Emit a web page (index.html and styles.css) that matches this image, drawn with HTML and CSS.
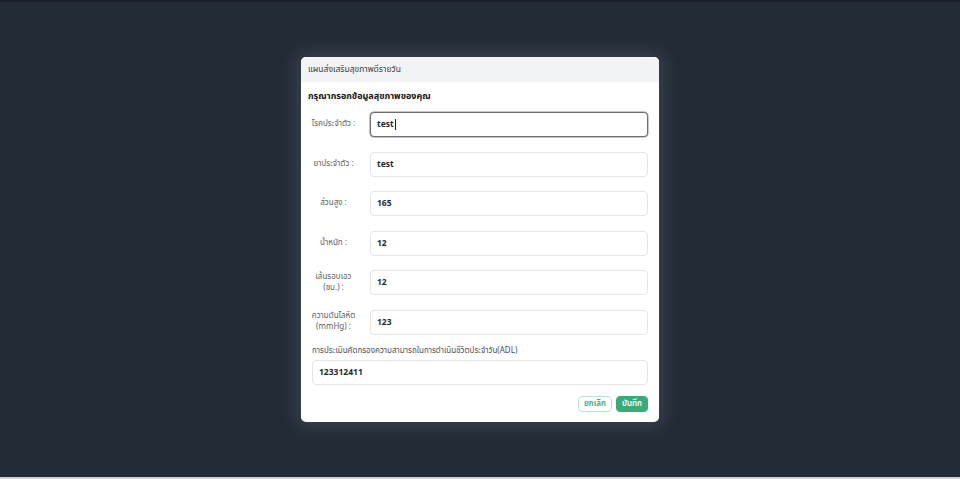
FILE: index.html
```html
<!DOCTYPE html>
<html lang="th">
<head>
<meta charset="utf-8">
<link rel="stylesheet" href="styles.css">
</head>
<body>
<div class="page">
  <div class="modal">
    <div class="modal-header">แผนส่งเสริมสุขภาพดีรายวัน</div>
    <div class="modal-body">
      <div class="subtitle">กรุณากรอกข้อมูลสุขภาพของคุณ</div>
      <div class="form-grid">
        <label class="lbl">โรคประจำตัว :</label>
        <div class="input focused">test<span class="caret"></span></div>
        <label class="lbl">ยาประจำตัว :</label>
        <div class="input">test</div>
        <label class="lbl">ส่วนสูง :</label>
        <div class="input">165</div>
        <label class="lbl">น้ำหนัก :</label>
        <div class="input">12</div>
        <label class="lbl">เส้นรอบเอว<br>(ซม.) :</label>
        <div class="input">12</div>
        <label class="lbl">ความดันโลหิต<br>(mmHg) :</label>
        <div class="input">123</div>
      </div>
      <div class="adl-label">การประเมินคัดกรองความสามารถในการดำเนินชีวิตประจำวัน(ADL)</div>
      <div class="input wide">123312411</div>
      <div class="actions">
        <button class="btn btn-outline">ยกเลิก</button>
        <button class="btn btn-fill">บันทึก</button>
      </div>
    </div>
  </div>
</div>
<div class="bottom-strip"></div>
</body>
</html>
```
FILE: styles.css
```css
* { box-sizing: border-box; }
html, body { margin: 0; padding: 0; }
body {
  width: 960px;
  height: 479px;
  overflow: hidden;
  background: #232b36;
  font-family: "Noto Sans Thai", "Noto Sans", "Open Sans", sans-serif;
  border-top: 2px solid #1c222b;
}
.page {
  height: 475px;
  display: flex;
  justify-content: center;
  align-items: flex-start;
  padding-top: 55px;
}
.modal {
  width: 358px;
  background: #ffffff;
  border-radius: 5px;
  overflow: hidden;
  box-shadow: 0 0 18px 4px rgba(120, 135, 155, 0.28);
}
.modal-header {
  height: 25px;
  background: #f2f3f4;
  display: flex;
  align-items: center;
  padding: 0 7px;
  font-size: 8.5px;
  color: #3a3f46;
}
.modal-body {
  padding: 0 11px 10px 7px;
}
.subtitle {
  padding-top: 8px;
  line-height: 12px;
  font-size: 9px;
  font-weight: 700;
  color: #111;
  margin-bottom: 10px;
}
.form-grid {
  display: grid;
  grid-template-columns: 43px 1fr;
  column-gap: 15px;
  row-gap: 14.5px;
  padding-left: 4px;
}
.lbl {
  display: flex;
  align-items: center;
  justify-content: center;
  text-align: center;
  font-size: 8px;
  line-height: 11px;
  color: #5a5f66;
  white-space: nowrap;
}
.input {
  height: 25px;
  border: 1px solid #e3e5e8;
  border-radius: 4px;
  display: flex;
  align-items: center;
  padding-left: 6px;
  font-size: 8.5px;
  font-weight: 700;
  color: #25292e;
  background: #fff;
}
.input.focused {
  border-color: #6a6f76;
  box-shadow: 0 0 0 0.5px #8a9096;
}
.caret {
  display: inline-block;
  width: 1px;
  height: 11px;
  background: #222;
  margin-left: 1px;
}
.adl-label {
  margin-top: 10px;
  padding-left: 4px;
  font-size: 8px;
  line-height: 12px;
  color: #4a4f56;
  margin-bottom: 3px;
}
.input.wide {
  margin-left: 4px;
}
.actions {
  display: flex;
  justify-content: flex-end;
  gap: 4px;
  margin-top: 11px;
}
.btn {
  height: 16px;
  padding: 0 5px;
  border-radius: 4px;
  font-family: inherit;
  font-size: 8px;
  font-weight: 600;
  display: flex;
  align-items: center;
  cursor: pointer;
}
.btn-outline {
  background: #fff;
  border: 1px solid #b9e3cf;
  color: #3aa877;
}
.btn-fill {
  background: #3aaa76;
  border: 1px solid #3aaa76;
  color: #fff;
}
.bottom-strip {
  position: absolute;
  left: 0;
  bottom: 0;
  width: 960px;
  height: 2px;
  background: #cfd3d8;
}
```
